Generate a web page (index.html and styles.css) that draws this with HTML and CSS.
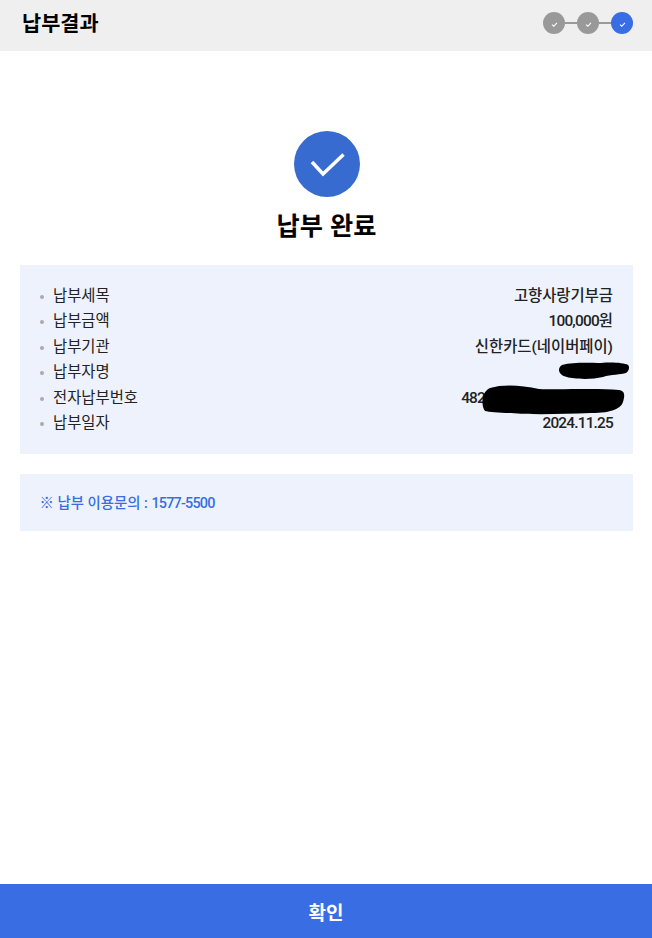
FILE: index.html
```html
<!DOCTYPE html>
<html lang="ko">
<head>
    <meta charset="UTF-8">
    <meta name="viewport" content="width=device-width, initial-scale=1.0">
    <title>납부결과</title>
    <link rel="stylesheet" href="styles.css">
</head>
<body>
    <header class="top-bar">
        <h1>납부결과</h1>
        <div class="steps">
            <span class="step"><svg viewBox="0 0 8 8"><path d="M1.2 4.200 3.200 6 6.800 2.200"/></svg></span>
            <span class="step-line"></span>
            <span class="step"><svg viewBox="0 0 8 8"><path d="M1.2 4.200 3.200 6 6.800 2.200"/></svg></span>
            <span class="step-line"></span>
            <span class="step active"><svg viewBox="0 0 8 8"><path d="M1.2 4.200 3.200 6 6.800 2.200"/></svg></span>
        </div>
    </header>

    <main class="content">
        <div class="done-icon">
            <svg viewBox="0 0 66 66"><path d="M18 31 29 43 49.500 23.500"/></svg>
        </div>
        <h2 class="done-title">납부 완료</h2>

        <div class="info-box">
            <ul class="info-list">
                <li><span class="label">납부세목</span><span class="value">고향사랑기부금</span></li>
                <li><span class="label">납부금액</span><span class="value"><span class="digits">100,000</span>원</span></li>
                <li><span class="label">납부기관</span><span class="value">신한카드(네이버페이)</span></li>
                <li><span class="label">납부자명</span><span class="value"></span></li>
                <li><span class="label">전자납부번호</span><span class="value number digits">482</span></li>
                <li><span class="label">납부일자</span><span class="value digits">2024.11.25</span></li>
            </ul>
            <svg class="scribble" viewBox="0 0 175 60">
                <path d="M101 3C112 0 128 1 140 1 152 0 163 1 167 3 169 5 168 9 165 11 160 13 150 12 142 15 130 18 112 17 106 15 101 14 98 11 98 8 98 6 99 4 101 3Z"/>
                <path d="M29 26C42 22 60 23 78 27 100 28 135 26 158 28 164 29 164 33 162 40 160 46 152 51 130 51 100 52 70 53 50 51 38 51 28 50 24 49 20 44 20 30 29 26Z"/>
            </svg>
        </div>

        <div class="notice">※ 납부 이용문의 : <span class="digits">1577-5500</span></div>
    </main>

    <button class="confirm-btn" type="button">확인</button>
</body>
</html>
```

FILE: styles.css
```css
* {
    box-sizing: border-box;
}
html, body {
    height: 100%;
}
body {
    margin: 0;
    display: flex;
    flex-direction: column;
    font-family: Roboto, "Noto Sans CJK KR", sans-serif;
    color: #222;
    background: #fff;
}
.top-bar {
    height: 51px;
    flex: none;
    display: flex;
    align-items: center;
    justify-content: space-between;
    padding: 0 19px 5px 22px;
    background: #efefef;
}
.top-bar h1 {
    margin: 0 0 2px;
    font-size: 20.8px;
    font-weight: 700;
    color: #000;
}
.steps {
    display: flex;
    align-items: center;
}
.step {
    width: 22px;
    height: 22px;
    display: flex;
    align-items: center;
    justify-content: center;
    border-radius: 50%;
    background: #999;
}
.step.active {
    background: #386de3;
}
.step svg {
    width: 7px;
    height: 7px;
    margin-top: 2px;
    fill: none;
    stroke: #fff;
    stroke-width: 1.2;
}
.step-line {
    width: 12px;
    height: 2px;
    background: #999;
}
.content {
    flex: 1;
    padding: 80px 19px 0 20px;
}
.done-icon {
    width: 66px;
    height: 66px;
    margin: 0 auto;
    border-radius: 50%;
    background: #386bcf;
}
.done-icon svg {
    display: block;
    width: 66px;
    height: 66px;
    fill: none;
    stroke: #fff;
    stroke-width: 3.5;
}
.done-title {
    margin: 12px 0 20px;
    font-size: 25.2px;
    line-height: 36px;
    font-weight: 700;
    word-spacing: 1px;
    text-align: center;
    color: #000;
}
.info-box {
    position: relative;
    padding: 18.5px 20px 17.5px;
    background: #edf2fc;
}
.info-list {
    margin: 0;
    padding: 0;
    list-style: none;
}
.info-list li {
    display: flex;
    justify-content: space-between;
    height: 25.5px;
    font-size: 15.4px;
    line-height: 25.5px;
}
.label {
    position: relative;
    padding-left: 13px;
}
.label::before {
    content: "";
    position: absolute;
    left: 0;
    top: 11px;
    width: 4px;
    height: 4px;
    border-radius: 50%;
    background: #aaa;
}
.value {
    font-weight: 500;
}
.digits {
    letter-spacing: -0.8px;
}
.number {
    margin-right: 128px;
}
.scribble {
    position: absolute;
    left: 441px;
    top: 97px;
    width: 175px;
    height: 60px;
    fill: #000;
}
.notice {
    margin-top: 20px;
    height: 57px;
    padding: 2px 20px 0 19.5px;
    font-size: 14.4px;
    font-weight: 500;
    line-height: 56px;
    color: #386de3;
    background: #edf2fc;
}
.confirm-btn {
    flex: none;
    width: 100%;
    height: 54px;
    border: 0;
    padding: 0;
    font-family: inherit;
    font-size: 19px;
    font-weight: 700;
    color: #fff;
    background: #386de3;
}
```
